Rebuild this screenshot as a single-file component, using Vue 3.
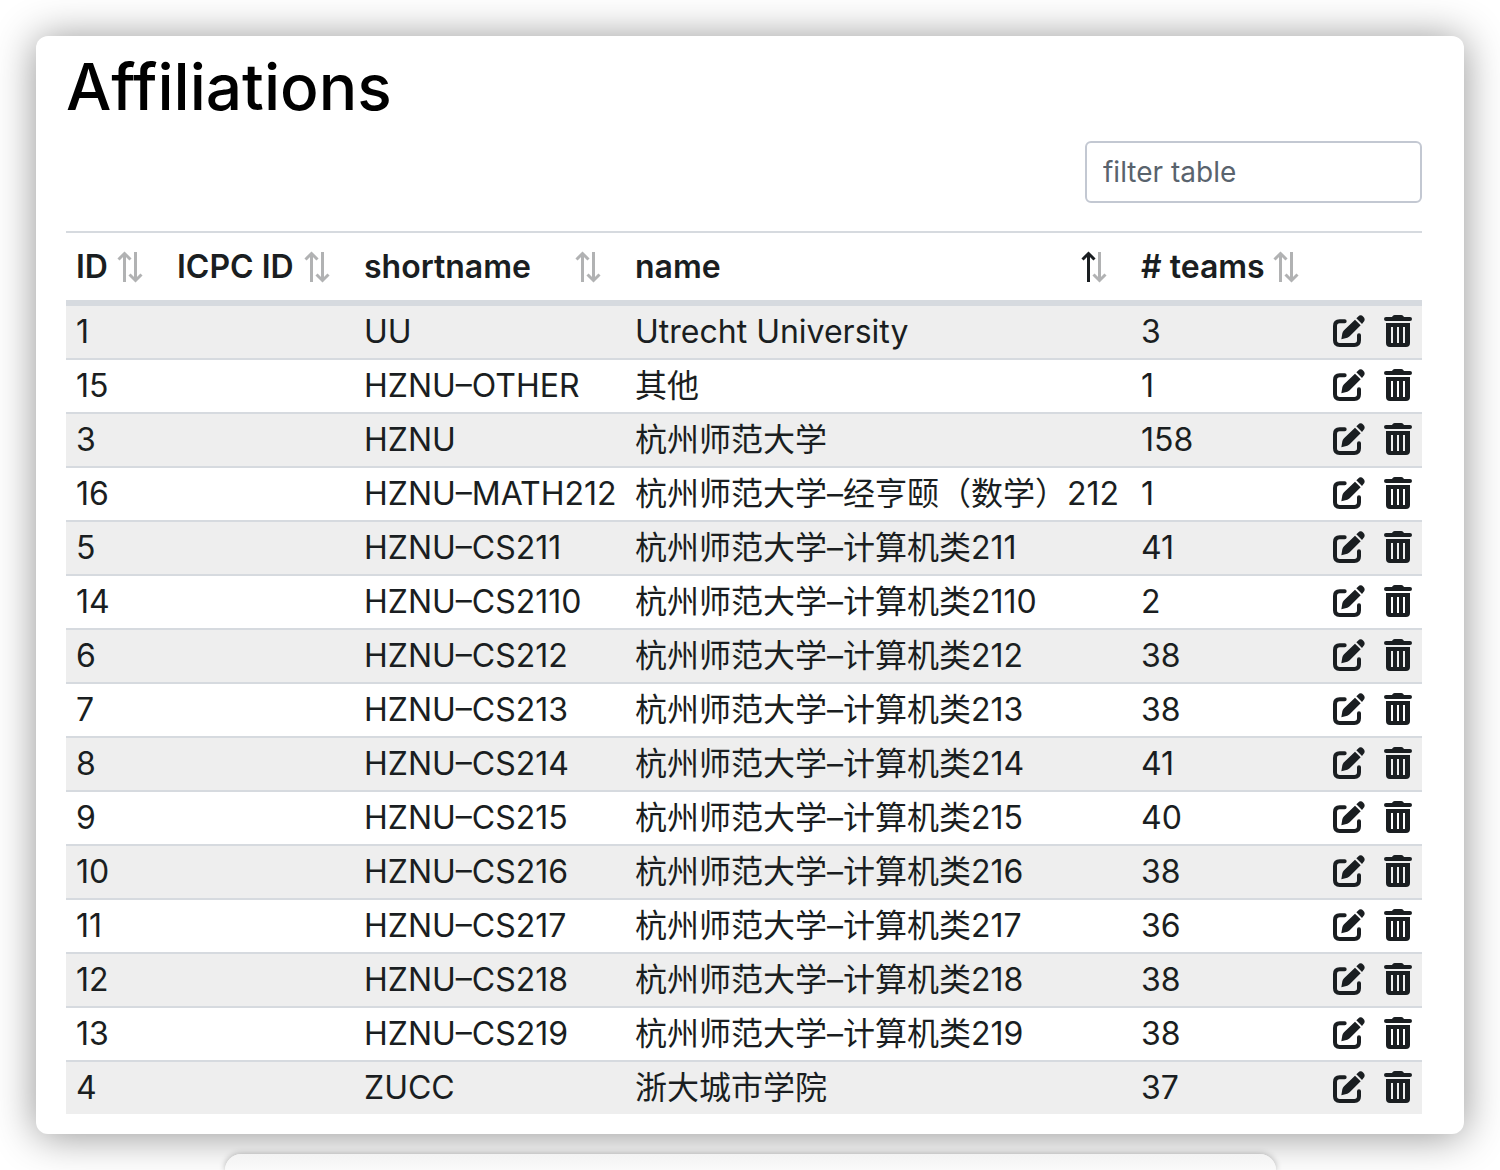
<script setup>
import { computed, ref } from 'vue'

const filter = ref('')

const columns = [
  { key: 'id', label: 'ID' },
  { key: 'icpc', label: 'ICPC ID' },
  { key: 'shortname', label: 'shortname' },
  { key: 'name', label: 'name', sorted: true },
  { key: 'teams', label: '# teams' },
]

const affiliations = [
  { id: 1, shortname: 'UU', name: 'Utrecht University', teams: 3 },
  { id: 15, shortname: 'HZNU–OTHER', name: '其他', teams: 1 },
  { id: 3, shortname: 'HZNU', name: '杭州师范大学', teams: 158 },
  { id: 16, shortname: 'HZNU–MATH212', name: '杭州师范大学–经亨颐（数学）212', teams: 1 },
  { id: 5, shortname: 'HZNU–CS211', name: '杭州师范大学–计算机类211', teams: 41 },
  { id: 14, shortname: 'HZNU–CS2110', name: '杭州师范大学–计算机类2110', teams: 2 },
  { id: 6, shortname: 'HZNU–CS212', name: '杭州师范大学–计算机类212', teams: 38 },
  { id: 7, shortname: 'HZNU–CS213', name: '杭州师范大学–计算机类213', teams: 38 },
  { id: 8, shortname: 'HZNU–CS214', name: '杭州师范大学–计算机类214', teams: 41 },
  { id: 9, shortname: 'HZNU–CS215', name: '杭州师范大学–计算机类215', teams: 40 },
  { id: 10, shortname: 'HZNU–CS216', name: '杭州师范大学–计算机类216', teams: 38 },
  { id: 11, shortname: 'HZNU–CS217', name: '杭州师范大学–计算机类217', teams: 36 },
  { id: 12, shortname: 'HZNU–CS218', name: '杭州师范大学–计算机类218', teams: 38 },
  { id: 13, shortname: 'HZNU–CS219', name: '杭州师范大学–计算机类219', teams: 38 },
  { id: 4, shortname: 'ZUCC', name: '浙大城市学院', teams: 37 },
]

const rows = computed(() => {
  const q = filter.value.trim().toLowerCase()
  return affiliations.filter((a) => Object.values(a).join(' ').toLowerCase().includes(q))
})
</script>

<template>
  <div class="page">
    <main class="card">
      <h1>Affiliations</h1>
      <div class="toolbar">
        <input v-model="filter" class="filter" type="search" placeholder="filter table" aria-label="filter table" />
      </div>
      <table>
        <colgroup>
          <col class="c-id" />
          <col class="c-icpc" />
          <col class="c-short" />
          <col class="c-name" />
          <col class="c-teams" />
          <col class="c-edit" />
          <col class="c-delete" />
        </colgroup>
        <thead>
          <tr>
            <th v-for="col in columns" :key="col.key" scope="col">
              <button class="sort" :class="{ sorted: col.sorted }" type="button">
                <span>{{ col.label }}</span>
                <svg class="sort-icon" viewBox="0 0 26 32" aria-hidden="true">
                  <path class="up" d="M7.500 31V3M1.500 8.500L7.500 2.500L13.500 8.500" />
                  <path class="down" d="M18.500 1V29M12.500 23.500L18.500 29.500L24.500 23.500" />
                </svg>
              </button>
            </th>
            <td></td>
            <td></td>
          </tr>
        </thead>
        <tbody>
          <tr v-for="a in rows" :key="a.id">
            <td><a href="#">{{ a.id }}</a></td>
            <td></td>
            <td><a href="#">{{ a.shortname }}</a></td>
            <td><a href="#">{{ a.name }}</a></td>
            <td><a href="#">{{ a.teams }}</a></td>
            <td>
              <a class="action" href="#" aria-label="edit">
                <svg class="edit-icon" viewBox="0 0 96 96" aria-hidden="true">
                  <path class="frame" d="M35 19H20Q6 19 6 33V76Q6 90 20 90H64Q78 90 78 76V61" />
                  <path d="M25 73L28 55Q29 50 33 46L66 14L83 31L50 64Q47 67 43 68Z" />
                  <path d="M70 10L75 5Q83 -3 91 5Q99 13 91 22L87 27Z" />
                </svg>
              </a>
            </td>
            <td>
              <a class="action" href="#" aria-label="delete">
                <svg class="trash-icon" viewBox="0 0 84 96" aria-hidden="true">
                  <path d="M6 6H24Q27 0 32 0H52Q57 0 60 6H78Q84 6 84 12T78 18H6Q0 18 0 12T6 6Z" />
                  <path
                    fill-rule="evenodd"
                    d="M6 24H78V84Q78 96 66 96H18Q6 96 6 84ZM21 36V84H27V36ZM39 36V84H45V36ZM57 36V84H63V36Z"
                  />
                </svg>
              </a>
            </td>
          </tr>
        </tbody>
      </table>
    </main>
    <div class="next-panel"></div>
  </div>
</template>

<style>
body {
  margin: 0;
  background: #fff;
}
</style>

<style scoped>
* {
  box-sizing: border-box;
}

.page {
  display: flex;
  flex-direction: column;
  gap: 20px;
  min-height: 100vh;
  padding: 36px 36px 0;
  overflow: hidden;
  color: #1a1e21;
  font-family: Inter, "Noto Sans CJK SC", sans-serif;
  font-size: 32px;
  line-height: 40px;
}

.card {
  padding: 12px 42px 20px 30px;
  border-radius: 12px;
  background: #fff;
  box-shadow: 0 2px 42px rgba(0, 0, 0, 0.43);
}

h1 {
  margin: 0;
  color: #000;
  font-size: 64px;
  font-weight: 500;
  line-height: 77px;
}

.toolbar {
  display: flex;
  justify-content: flex-end;
  padding: 16px 0 28px;
}

.filter {
  width: 337px;
  height: 62px;
  padding: 0 16px;
  border: 2px solid #c3c8d2;
  border-radius: 6px;
  outline: 0;
  background: #fff;
  color: inherit;
  font: inherit;
  font-size: 28px;
  appearance: none;
}

.filter::placeholder {
  color: #59636d;
  opacity: 1;
}

table {
  width: 100%;
  border-top: 2px solid #d6dadf;
  border-spacing: 0;
  table-layout: fixed;
}

.c-id { width: 101px; }
.c-icpc { width: 187px; }
.c-short { width: 271px; }
.c-name { width: 506px; }
.c-teams { width: 192px; }
.c-edit { width: 51px; }
.c-delete { width: 48px; }

th,
td {
  padding: 0 0 0 10px;
  text-align: left;
  white-space: nowrap;
}

thead th,
thead td {
  height: 73px;
  border-bottom: 6px solid #d6dadf;
}

tbody td {
  height: 54px;
  border-bottom: 2px solid #d6dadf;
}

tbody tr:nth-child(odd) {
  background: #eee;
}

tbody tr:last-child td {
  height: 52px;
  border-bottom: 0;
}

.sort {
  display: flex;
  align-items: center;
  justify-content: space-between;
  width: 100%;
  padding: 0 24px 0 0;
  border: 0;
  background: none;
  color: inherit;
  font: inherit;
  font-weight: 600;
  cursor: pointer;
}

.sort-icon {
  flex: none;
  width: 26px;
  height: 32px;
  fill: none;
  stroke: #b1b2b3;
  stroke-width: 3;
}

.sorted .up {
  stroke: #1a1e21;
}

a {
  color: inherit;
  text-decoration: none;
}

.action {
  display: flex;
  align-items: center;
  padding-bottom: 2px;
}

.action svg {
  height: 32px;
  fill: currentColor;
}

.edit-icon {
  width: 32px;
}

.edit-icon .frame {
  fill: none;
  stroke: currentColor;
  stroke-linecap: round;
  stroke-width: 12;
}

.trash-icon {
  width: 28px;
}

.next-panel {
  flex: 1;
  width: 1051px;
  max-width: 100%;
  min-height: 16px;
  margin: 0 auto;
  border-radius: 22px 22px 0 0;
  background: linear-gradient(#f3f3f3, #fafafa 16px);
  box-shadow: 0 0 6px rgba(0, 0, 0, 0.3);
}
</style>
